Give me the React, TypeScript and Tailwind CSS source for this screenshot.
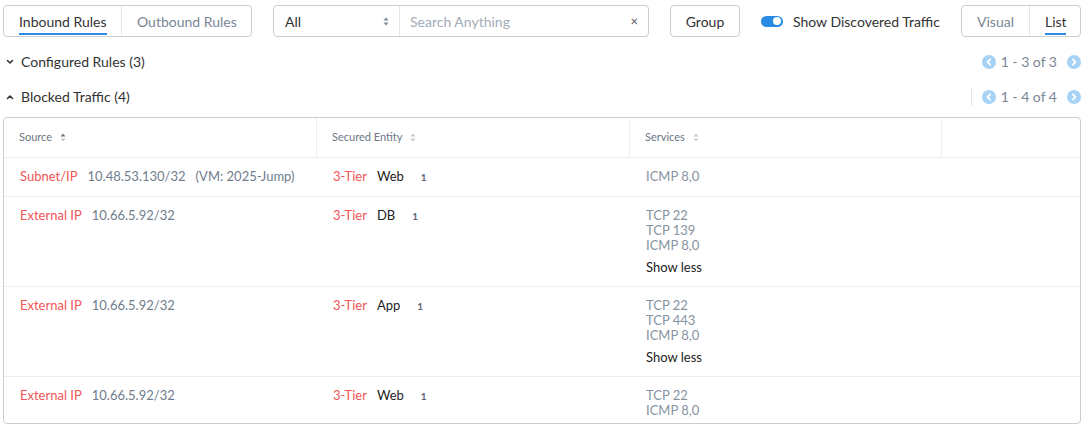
import type { ReactNode } from "react";

type Row = {
	kind: string;
	ip: string;
	vm?: string;
	tier: string;
	entity: string;
	services: string[];
	showLess?: boolean;
};

const rows: Row[] = [
	{ kind: "Subnet/IP", ip: "10.48.53.130/32", vm: "(VM: 2025-Jump)", tier: "3-Tier", entity: "Web", services: ["ICMP 8,0"] },
	{ kind: "External IP", ip: "10.66.5.92/32", tier: "3-Tier", entity: "DB", services: ["TCP 22", "TCP 139", "ICMP 8,0"], showLess: true },
	{ kind: "External IP", ip: "10.66.5.92/32", tier: "3-Tier", entity: "App", services: ["TCP 22", "TCP 443", "ICMP 8,0"], showLess: true },
	{ kind: "External IP", ip: "10.66.5.92/32", tier: "3-Tier", entity: "Web", services: ["TCP 22", "ICMP 8,0"] },
];

// 정렬 아이콘 (위/아래 삼각형)
const SortIcon = ({ active }: { active?: boolean }) => (
	<svg width="6" height="9" viewBox="0 0 6 9" className="ml-[8px]">
		<path d="M3 0.5 L5.5 3.5 H0.5 Z" fill={active ? "#6b7785" : "#c5cbd2"} />
		<path d="M3 8.5 L5.5 5.5 H0.5 Z" fill="#c5cbd2" />
	</svg>
);

const PageCircle = ({ dir }: { dir: "left" | "right" }) => (
	<svg width="14" height="14" viewBox="0 0 14 14">
		<circle cx="7" cy="7" r="7" fill="#a6d2f6" />
		<path
			d={dir === "left" ? "M8.2 4.3 L5.5 7 L8.2 9.7" : "M5.8 4.3 L8.5 7 L5.8 9.7"}
			stroke="#fff"
			strokeWidth="1.8"
			fill="none"
			strokeLinecap="round"
			strokeLinejoin="round"
		/>
	</svg>
);

const Pager = ({ text, divider }: { text: string; divider?: boolean }) => (
	<div className="flex items-center">
		{divider && <div className="w-px h-[18px] bg-[#e3e6ea] mr-[10px]" />}
		<PageCircle dir="left" />
		<span className="ml-[5px] mr-[10px] text-[14px] text-[#7a8694]">{text}</span>
		<PageCircle dir="right" />
	</div>
);

const Chevron = ({ up }: { up?: boolean }) => (
	<svg width="8" height="6" viewBox="0 0 8 6" className="mr-[7px] ml-[3px]">
		<path
			d={up ? "M1.5 4.5 L4 2 L6.5 4.5" : "M1.5 1.5 L4 4 L6.5 1.5"}
			stroke="#333"
			strokeWidth="1.6"
			fill="none"
			strokeLinecap="round"
			strokeLinejoin="round"
		/>
	</svg>
);

const Cell = ({ children }: { children?: ReactNode }) => (
	<div className="pl-[16px] pt-[11px] pb-[11px] whitespace-nowrap">{children}</div>
);

const App = () => {
	return (
		<div className="w-[1087px] h-[428px] bg-white overflow-hidden pt-[5px] pl-[3px] pr-[6px] text-[#333] font-['Lato','Liberation_Sans',sans-serif]">
			{/* 상단 툴바 */}
			<div className="flex items-center h-[32px] whitespace-nowrap">
				<div className="flex shrink-0 h-full w-[249px] border border-[#c9ced5] rounded-[4px] text-[14px]">
					<div className="relative flex items-center shrink-0 w-[118px] pl-[15px] border-r border-[#e3e6ea] text-[#333]">
						Inbound Rules
						<div className="absolute left-[15px] w-[88px] bottom-[1px] h-[2px] bg-[#2b8ce6]" />
					</div>
					<div className="flex items-center pl-[15px] text-[#7a8694]">Outbound Rules</div>
				</div>

				<div className="flex shrink-0 h-full ml-[21px] w-[376px] border border-[#c9ced5] rounded-[4px] text-[14px]">
					<div className="flex items-center justify-between w-[126px] pl-[11px] pr-[10px] border-r border-[#e3e6ea]">
						<span>All</span>
						<svg width="6" height="9" viewBox="0 0 6 9">
							<path d="M3 0.5 L5.5 3.5 H0.5 Z" fill="#7a8694" />
							<path d="M3 8.5 L5.5 5.5 H0.5 Z" fill="#7a8694" />
						</svg>
					</div>
					<div className="flex flex-1 items-center justify-between pl-[10px] pr-[10px]">
						<span className="text-[#a4adb8]">Search Anything</span>
						<span className="text-[#555] text-[13px] leading-none">×</span>
					</div>
				</div>

				<div className="flex shrink-0 items-center justify-center h-full ml-[21px] w-[70px] border border-[#c9ced5] rounded-[4px] text-[14px]">
					Group
				</div>

				<div className="flex items-center ml-[21px] text-[14px]">
					<div className="flex items-center justify-end w-[22px] h-[11px] rounded-full bg-[#2b8ce6] pr-[2px]">
						<div className="w-[8px] h-[8px] rounded-full bg-white" />
					</div>
					<span className="ml-[10px]">Show Discovered Traffic</span>
				</div>

				<div className="flex shrink-0 h-full w-[120px] ml-auto border border-[#c9ced5] rounded-[4px] text-[14px]">
					<div className="flex items-center shrink-0 w-[68px] pl-[15px] border-r border-[#e3e6ea] text-[#7a8694]">Visual</div>
					<div className="relative flex items-center pl-[15px]">
						List
						<div className="absolute left-[15px] w-[21px] bottom-[1px] h-[2px] bg-[#2b8ce6]" />
					</div>
				</div>
			</div>

			{/* 섹션 헤더 */}
			<div className="mt-[7px] flex items-center justify-between h-[35px] text-[14px]">
				<div className="flex items-center">
					<Chevron />
					<span>Configured Rules (3)</span>
				</div>
				<Pager text="1 - 3 of 3" />
			</div>
			<div className="flex items-center justify-between h-[35px] text-[14px]">
				<div className="flex items-center">
					<Chevron up />
					<span>Blocked Traffic (4)</span>
				</div>
				<Pager text="1 - 4 of 4" divider />
			</div>

			{/* 테이블 */}
			<div className="mt-[3px] h-[307px] overflow-hidden border border-[#c9ced5] rounded-[4px] text-[13px]">
				<div className="grid grid-cols-[313px_313px_312px_1fr] h-[40px] border-b border-[#eceef1] text-[11px] text-[#6b7785]">
					<div className="flex items-center pl-[15px] border-r border-[#eceef1]">
						Source
						<SortIcon active />
					</div>
					<div className="flex items-center pl-[15px] border-r border-[#eceef1]">
						Secured Entity
						<SortIcon />
					</div>
					<div className="flex items-center pl-[15px] border-r border-[#eceef1]">
						Services
						<SortIcon />
					</div>
					<div />
				</div>

				{rows.map((row, i) => (
					<div key={i} className="grid grid-cols-[313px_313px_312px_1fr] border-b border-[#eceef1] leading-[15px]">
						<Cell>
							<span className="text-[#f05656]">{row.kind}</span>
							<span className="ml-[10px] text-[#6f7d8c]">{row.ip}</span>
							{row.vm && <span className="ml-[10px] text-[#6f7d8c]">{row.vm}</span>}
						</Cell>
						<Cell>
							<span className="text-[#f05656]">{row.tier}</span>
							<span className="ml-[10px] text-[#222]">{row.entity}</span>
							<span className="ml-[17px] text-[10px] font-bold text-[#5d6570]">1</span>
						</Cell>
						<Cell>
							{row.services.map((s) => (
								<div key={s} className="text-[#8693a1]">
									{s}
								</div>
							))}
							{row.showLess && <div className="mt-[6px] leading-[16px] text-[#222]">Show less</div>}
						</Cell>
						<div />
					</div>
				))}
			</div>
		</div>
	);
};

export default App;
